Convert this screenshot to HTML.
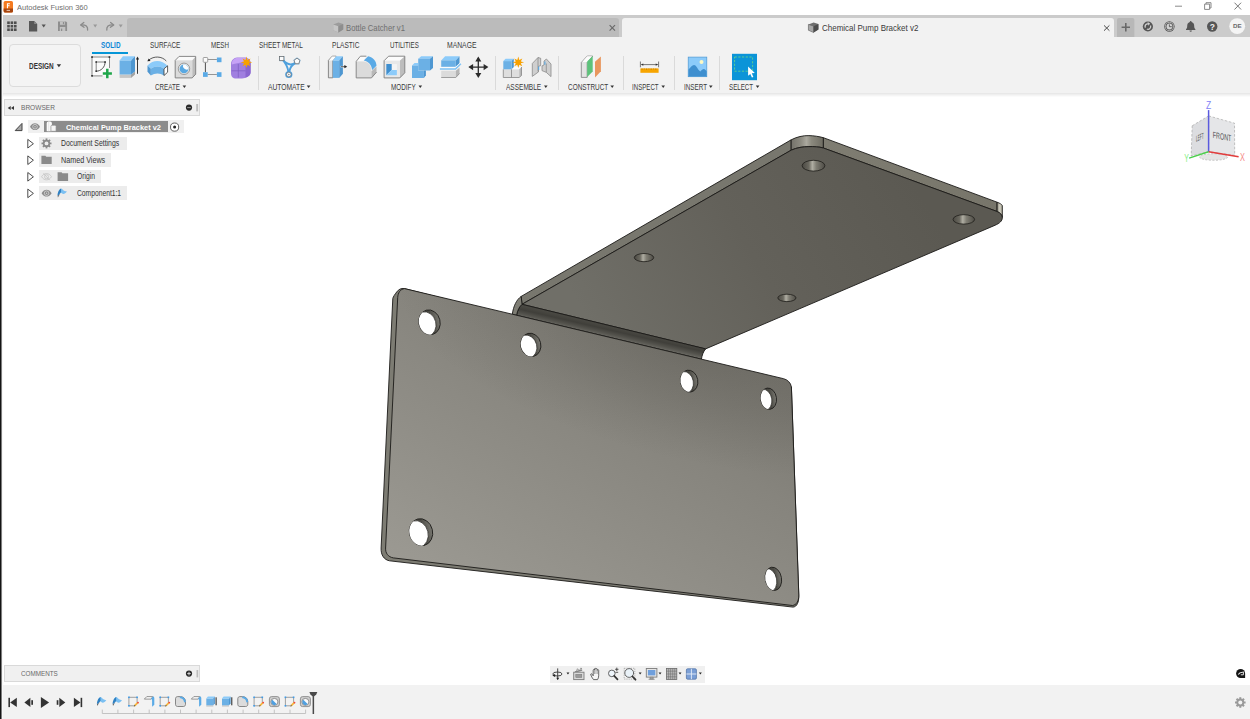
<!DOCTYPE html>
<html lang="en">
<head>
<meta charset="utf-8">
<title>Autodesk Fusion 360</title>
<style>
html,body{margin:0;padding:0;}
body{width:1250px;height:719px;overflow:hidden;background:#fff;font-family:"Liberation Sans",Arial,sans-serif;}
#app{position:relative;width:1250px;height:719px;overflow:hidden;background:#fff;}
.abs{position:absolute;}
.t{position:absolute;white-space:nowrap;transform-origin:0 50%;line-height:10px;height:10px;font-size:7px;color:#4a4a4a;}
#titlebar{left:0;top:0;width:1250px;height:15px;background:#fff;}
#tabbar{left:0;top:15px;width:1250px;height:22px;background:#cbcbcb;}
#tab1{left:127px;top:18px;width:492px;height:19px;background:#bbbbbb;border-radius:3px 3px 0 0;}
#tab2{left:622px;top:18px;width:492px;height:19px;background:#f2f2f2;border-radius:3px 3px 0 0;}
#toolbar{left:0;top:37px;width:1250px;height:56px;background:#f2f2f2;}
#tbline{left:0;top:93px;width:1250px;height:4px;background:linear-gradient(#e8e8e8 0,#e8e8e8 25%,#efefef 25%,#efefef 50%,#f5f5f5 50%,#f5f5f5 75%,#fbfbfb 75%);}
#tbline2{display:none;}
#leftedge{left:0;top:0;width:3px;height:719px;background:linear-gradient(90deg,#141414 0,#141414 33.3%,#7d7d7d 33.3%,#7d7d7d 66.6%,#f7f7f7 66.6%);}
.sep{position:absolute;width:1px;top:56px;height:34px;background:#dadada;}
#design{left:9px;top:44px;width:70px;height:41px;border:1px solid #dcdcdc;border-radius:4px;background:#f4f4f4;}
.tab{font-size:7px;color:#3c3c3c;}
.lbl{font-size:7px;color:#3c3c3c;}
.row{position:absolute;background:#ececec;height:13px;}
#bottombar{left:0;top:685px;width:1250px;height:34px;background:#f2f2f2;}
#comments{left:4px;top:665px;width:196px;height:17px;background:#f0f0f0;border:1px solid #d9d9d9;box-sizing:border-box;}
#browserhdr{left:4px;top:99px;width:196px;height:17px;background:#f0f0f0;border:1px solid #d9d9d9;box-sizing:border-box;}
#navbar{left:550px;top:666px;width:155px;height:17px;background:#f0f0f0;}
</style>
</head>
<body>
<div id="app">
<svg class="abs" style="left:0;top:97px" width="1250" height="588" viewBox="0 97 1250 588">
<defs>
  <linearGradient id="frontg" gradientUnits="userSpaceOnUse" x1="790" y1="385" x2="620" y2="686">
    <stop offset="0" stop-color="#7a7871"/>
    <stop offset="0.3" stop-color="#86847d"/>
    <stop offset="0.6" stop-color="#8f8d86"/>
    <stop offset="1" stop-color="#9b9992"/>
  </linearGradient>
  <radialGradient id="shadeg" gradientUnits="userSpaceOnUse" cx="0" cy="0" r="1" gradientTransform="translate(690 350) rotate(13.2) scale(300 110)">
    <stop offset="0" stop-color="#3c3a34" stop-opacity="0.22"/>
    <stop offset="0.45" stop-color="#3c3a34" stop-opacity="0.13"/>
    <stop offset="1" stop-color="#3c3a34" stop-opacity="0"/>
  </radialGradient>
  <clipPath id="frontclip"><path d="M404.500 288.600L783.600 378.700C787.500 379.700 790.800 382.700 791.400 387L798.800 595C798.900 601 796.500 605 792.500 605.500L393.400 557.900C388 557 385.300 553 385.600 548L397.700 297.500C398 293 400 289.300 404.500 288.600z"/></clipPath>
  <linearGradient id="topg" gradientUnits="userSpaceOnUse" x1="900" y1="160" x2="600" y2="340">
    <stop offset="0" stop-color="#5b5952"/>
    <stop offset="0.5" stop-color="#63615a"/>
    <stop offset="1" stop-color="#706f68"/>
  </linearGradient>
  <linearGradient id="bendg" gradientUnits="userSpaceOnUse" x1="615" y1="326.9" x2="612.3" y2="338.6">
    <stop offset="0" stop-color="#4a4943"/>
    <stop offset="0.35" stop-color="#403f3a"/>
    <stop offset="0.7" stop-color="#55544e"/>
    <stop offset="1" stop-color="#6e6d66"/>
  </linearGradient>
  <linearGradient id="wallg" x1="0" y1="0" x2="1" y2="0">
    <stop offset="0" stop-color="#3a3934"/>
    <stop offset="0.6" stop-color="#4a4943"/>
    <stop offset="1" stop-color="#7b7a73"/>
  </linearGradient>
  <linearGradient id="twallg" x1="0" y1="0" x2="1" y2="0">
    <stop offset="0" stop-color="#4a4842"/>
    <stop offset="0.3" stop-color="#6b6960"/>
    <stop offset="0.45" stop-color="#b0aea3"/>
    <stop offset="0.62" stop-color="#7f7d73"/>
    <stop offset="1" stop-color="#4d4b45"/>
  </linearGradient>
  <linearGradient id="backg" gradientUnits="userSpaceOnUse" x1="823" y1="0" x2="997" y2="0">
    <stop offset="0" stop-color="#7f7d72"/>
    <stop offset="1" stop-color="#77756a"/>
  </linearGradient>
  <linearGradient id="rcg" gradientUnits="userSpaceOnUse" x1="997" y1="0" x2="1002.5" y2="0">
    <stop offset="0" stop-color="#8a887b"/>
    <stop offset="0.5" stop-color="#cfcdbf"/>
    <stop offset="1" stop-color="#a9a799"/>
  </linearGradient>
  <linearGradient id="cornerg" gradientUnits="userSpaceOnUse" x1="791" y1="0" x2="824" y2="0">
    <stop offset="0" stop-color="#74726a"/>
    <stop offset="0.3" stop-color="#8d8b81"/>
    <stop offset="0.47" stop-color="#aaa89e"/>
    <stop offset="0.62" stop-color="#8b897e"/>
    <stop offset="1" stop-color="#6c6a60"/>
  </linearGradient>
</defs>

<path d="M521.2 296.4L791.2 139.8L791.2 150.2L522 304.3z" fill="#78776e" stroke="#1b1a17" stroke-width="0.9" stroke-linejoin="round"/>
<path d="M791.2 139.8C797 136.800 803 135.500 808.900 135.600C814 135.700 819 136.500 823.400 137.700L823.400 148C819 146.800 814 146.500 808.900 146.600C803 146.700 797 147.500 791.200 150.200z" fill="url(#cornerg)" stroke="#1b1a17" stroke-width="0.9" stroke-linejoin="round"/>
<path d="M823.4 137.7L997.1 202.2L997.1 211.5L823.4 148z" fill="url(#backg)" stroke="#1b1a17" stroke-width="0.9" stroke-linejoin="round"/>
<path d="M997.1 202.2C1000 203.300 1001.800 204.400 1002.300 205.600L1002.300 217.500C1001.800 214.500 1000 212.800 997.100 211.500z" fill="url(#rcg)" stroke="#1b1a17" stroke-width="0.9" stroke-linejoin="round"/>
<path d="M522 304.3L791.2 150.2C797 147.500 803 146.700 808.900 146.600C814 146.500 819 146.800 823.400 148L997.100 211.500C1000.500 213 1002.300 215 1002.300 217.800C1002.300 221 999.500 223.300 995.200 225.200L705.600 348.900z" fill="url(#topg)" stroke="#1b1a17" stroke-width="0.9" stroke-linejoin="round"/>
<ellipse cx="813.5" cy="165.7" rx="11.4" ry="5.4" fill="url(#twallg)" stroke="#1f1e1b" stroke-width="0.8"/>
<ellipse cx="963.8" cy="219.4" rx="10.8" ry="4.7" fill="url(#twallg)" stroke="#1f1e1b" stroke-width="0.8"/>
<ellipse cx="644" cy="257.6" rx="9.7" ry="4.1" fill="url(#twallg)" stroke="#1f1e1b" stroke-width="0.8"/>
<ellipse cx="786.9" cy="297.9" rx="9.1" ry="3.7" fill="url(#twallg)" stroke="#1f1e1b" stroke-width="0.8"/>
<path d="M516.600 315.300C517.400 310.300 519.400 306.600 522 304.300L705.600 348.900C703.300 351.500 702 355.300 701.400 359.200z" fill="url(#bendg)" stroke="#1b1a17" stroke-width="0.9" stroke-linejoin="round"/>
<path d="M512.300 314.100C513.500 306 516.500 299.700 521.200 296.400L522 304.300C519.400 306.600 517.400 310.300 516.600 315.300z" fill="#7e7d74" stroke="#1b1a17" stroke-width="0.9" stroke-linejoin="round"/>
<path d="M404.500 288.600C401 287.900 398.600 289.500 396.700 292C394.800 294.500 393.300 296.500 392.800 298.400L381.100 548C380.800 555 384 559.800 389.500 560.800L793 607.100C797 606.800 798.900 602 798.800 596L791.400 387z" fill="#7d7c73" stroke="#1b1a17" stroke-width="0.9" stroke-linejoin="round"/>
<path d="M404.500 288.600L783.600 378.700C787.500 379.700 790.800 382.700 791.400 387L798.800 595C798.900 601 796.500 605 792.500 605.500L393.400 557.900C388 557 385.300 553 385.600 548L397.700 297.500C398 293 400 289.300 404.500 288.600z" fill="url(#frontg)" stroke="#1b1a17" stroke-width="0.9" stroke-linejoin="round"/>
<g clip-path="url(#frontclip)"><rect x="380" y="280" width="430" height="340" fill="url(#shadeg)"/></g>
<g transform="rotate(-14 429.5 322.3)"><clipPath id="hc1"><ellipse cx="429.5" cy="322.3" rx="10.6" ry="12.5"/></clipPath><ellipse cx="429.5" cy="322.3" rx="10.6" ry="12.5" fill="url(#wallg)" stroke="#22211e" stroke-width="0.9"/><g clip-path="url(#hc1)"><ellipse cx="425.0" cy="323.1" rx="10.6" ry="12.5" fill="#fff" stroke="#2a2925" stroke-width="0.7"/></g></g>
<g transform="rotate(-14 530.8 344.9)"><clipPath id="hc2"><ellipse cx="530.8" cy="344.9" rx="10" ry="11.8"/></clipPath><ellipse cx="530.8" cy="344.9" rx="10" ry="11.8" fill="url(#wallg)" stroke="#22211e" stroke-width="0.9"/><g clip-path="url(#hc2)"><ellipse cx="526.5" cy="345.7" rx="10" ry="11.8" fill="#fff" stroke="#2a2925" stroke-width="0.7"/></g></g>
<g transform="rotate(-10 689.1 381.1)"><clipPath id="hc3"><ellipse cx="689.1" cy="381.1" rx="8.7" ry="11.0"/></clipPath><ellipse cx="689.1" cy="381.1" rx="8.7" ry="11.0" fill="url(#wallg)" stroke="#22211e" stroke-width="0.9"/><g clip-path="url(#hc3)"><ellipse cx="684.5" cy="381.70000000000005" rx="8.7" ry="11.0" fill="#fff" stroke="#2a2925" stroke-width="0.7"/></g></g>
<g transform="rotate(-8 768.6 398.7)"><clipPath id="hc4"><ellipse cx="768.6" cy="398.7" rx="7.9" ry="10.7"/></clipPath><ellipse cx="768.6" cy="398.7" rx="7.9" ry="10.7" fill="url(#wallg)" stroke="#22211e" stroke-width="0.9"/><g clip-path="url(#hc4)"><ellipse cx="763.8000000000001" cy="399.3" rx="7.9" ry="10.7" fill="#fff" stroke="#2a2925" stroke-width="0.7"/></g></g>
<g transform="rotate(-14 421 532.2)"><clipPath id="hc5"><ellipse cx="421" cy="532.2" rx="11.6" ry="13.6"/></clipPath><ellipse cx="421" cy="532.2" rx="11.6" ry="13.6" fill="url(#wallg)" stroke="#22211e" stroke-width="0.9"/><g clip-path="url(#hc5)"><ellipse cx="416.2" cy="533.0" rx="11.6" ry="13.6" fill="#fff" stroke="#2a2925" stroke-width="0.7"/></g></g>
<g transform="rotate(-10 773.4 578.8)"><clipPath id="hc6"><ellipse cx="773.4" cy="578.8" rx="8.1" ry="11.7"/></clipPath><ellipse cx="773.4" cy="578.8" rx="8.1" ry="11.7" fill="url(#wallg)" stroke="#22211e" stroke-width="0.9"/><g clip-path="url(#hc6)"><ellipse cx="768.4" cy="579.4" rx="8.1" ry="11.7" fill="#fff" stroke="#2a2925" stroke-width="0.7"/></g></g>
<g>
  <ellipse cx="1213.600" cy="157" rx="14" ry="3.300" fill="#e4e4e4" stroke="#b0b0b0" stroke-width="0.700" stroke-dasharray="2 1.500"/>
  <path d="M1192.200 125.800L1208.600 115.900L1208.600 151.800L1191.200 156z" fill="#d9dadd" fill-opacity="0.920" stroke="#a9a9a9" stroke-width="0.700" stroke-dasharray="2.600 1.600"/>
  <path d="M1208.600 115.900L1234.500 123.200L1234.700 155.300L1208.600 151.800z" fill="#e3e4e6" fill-opacity="0.920" stroke="#a9a9a9" stroke-width="0.700" stroke-dasharray="2.600 1.600"/>
  <text transform="matrix(1 -0.44 0 1 1195.900 141.700)" font-family="'Liberation Sans',sans-serif" font-size="8.400" fill="#4e4e4e" textLength="7.800" lengthAdjust="spacingAndGlyphs">LEFT</text>
  <text transform="matrix(1 0.19 0 1 1212.800 137.800)" font-family="'Liberation Sans',sans-serif" font-size="9" fill="#4e4e4e" textLength="18.500" lengthAdjust="spacingAndGlyphs">FRONT</text>
  <path d="M1208.600 110.100V151.800" stroke="#5a5ade" stroke-width="1.500"/>
  <path d="M1208.600 151.800L1238.600 156.800" stroke="#e23c3c" stroke-width="1.500"/>
  <path d="M1208.600 151.800L1189.100 158.100" stroke="#4ccf4c" stroke-width="1.500"/>
  <text x="1206.100" y="108.600" font-family="'Liberation Sans',sans-serif" font-size="10" fill="#8282f6" textLength="5.200" lengthAdjust="spacingAndGlyphs">Z</text>
  <text x="1240.100" y="160.700" font-family="'Liberation Sans',sans-serif" font-size="10" fill="#f58585" textLength="4.900" lengthAdjust="spacingAndGlyphs">X</text>
  <text x="1184.300" y="162.300" font-family="'Liberation Sans',sans-serif" font-size="10" fill="#86ee86" textLength="4.600" lengthAdjust="spacingAndGlyphs">Y</text>
</g>

</svg>
<div class="abs" id="titlebar"></div>
<div class="abs" id="tabbar"></div>
<div class="abs" id="tab1"></div>
<div class="abs" id="tab2"></div>
<div class="abs" id="toolbar"></div>
<div class="abs" id="tbline"></div>
<div class="abs" id="tbline2"></div>
<!-- title bar -->
<svg class="abs" style="left:0;top:0" width="1250" height="38" viewBox="0 0 1250 38">
  <!-- app icon -->
  <rect x="3.6" y="1" width="9.4" height="11.5" rx="1.6" fill="#f47a20"/>
  <path d="M3.6 8.6h9.4v2.3a1.6 1.6 0 0 1-1.6 1.6h-6.2a1.6 1.6 0 0 1-1.6-1.6z" fill="#a5440f"/>
  <rect x="6.6" y="9.9" width="3.4" height="0.9" fill="#f6d5c0"/>
  <path d="M6.9 3.2h3v1h-1.9v1.1h1.6v1h-1.6v1.9h-1.1z" fill="#fff"/>
  <!-- window controls -->
  <path d="M1175 6.2h7" stroke="#7d7d7d" stroke-width="0.9" fill="none"/>
  <path d="M1204.6 4.1h5v5.3h-5z M1206 4.1v-1.4h5v5.3h-1.4" stroke="#7d7d7d" stroke-width="0.9" fill="none"/>
  <path d="M1234.5 2.7l6.6 6.8M1241.1 2.7l-6.6 6.8" stroke="#6a6a6a" stroke-width="0.9" fill="none"/>
  <!-- QAT: grid -->
  <g fill="#4e4e4e">
    <rect x="7.2" y="21.4" width="2.6" height="2.6"/><rect x="10.6" y="21.4" width="2.6" height="2.6"/><rect x="14" y="21.4" width="2.6" height="2.6"/>
    <rect x="7.2" y="24.9" width="2.6" height="2.6"/><rect x="10.6" y="24.9" width="2.6" height="2.6"/><rect x="14" y="24.9" width="2.6" height="2.6"/>
    <rect x="7.2" y="28.4" width="2.6" height="2.6"/><rect x="10.6" y="28.4" width="2.6" height="2.6"/><rect x="14" y="28.4" width="2.6" height="2.6"/>
  </g>
  <!-- file -->
  <path d="M29 21.1h5.2l3 3v7.4h-8.2z" fill="#575757"/>
  <path d="M34.2 21.1v3h3z" fill="#8a8a8a"/>
  <path d="M41.6 24.5h4.2l-2.1 3.1z" fill="#555"/>
  <!-- save -->
  <path d="M58 21.4h8l1.1 1.1v8.5h-9.1z" fill="#8e8e8e"/>
  <rect x="60" y="21.4" width="4.8" height="3.4" fill="#c2c2c2"/>
  <rect x="62.9" y="22" width="1.1" height="2.2" fill="#8e8e8e"/>
  <rect x="59.8" y="27" width="5.5" height="4" fill="#c2c2c2"/>
  <rect x="61" y="28.6" width="1.2" height="2.4" fill="#8e8e8e"/>
  <!-- undo -->
  <path d="M87.6 30c0.4-3.4-1.6-5.4-6.2-5.2" stroke="#8a8a8a" stroke-width="1.3" fill="none" stroke-linecap="round"/>
  <path d="M83.8 22.4l-3.2 2.5 3.4 2.4" stroke="#8a8a8a" stroke-width="1.3" fill="none" stroke-linecap="round" stroke-linejoin="round"/>
  <path d="M93.2 24.6h4l-2 2.9z" fill="#999"/>
  <!-- redo -->
  <path d="M106.8 30c-0.4-3.4 1.6-5.4 6.2-5.2" stroke="#8a8a8a" stroke-width="1.3" fill="none" stroke-linecap="round"/>
  <path d="M110.6 22.4l3.2 2.5-3.4 2.4" stroke="#8a8a8a" stroke-width="1.3" fill="none" stroke-linecap="round" stroke-linejoin="round"/>
  <path d="M118.7 24.6h4l-2 2.9z" fill="#999"/>
  <!-- tab 1 icon + close -->
  <g>
    <path d="M333.200 24.400l5.200-2 4.800 1.600v5.400l-4.800 3.200-5.200-2.400z" fill="#9c9c9c"/>
    <path d="M333.200 24.400l5.200 1.800v6.400l-5.200-2.400z" fill="#c6c6c6"/>
    <path d="M338.400 26.200l4.800-2.200v5.400l-4.800 3.200z" fill="#8e8e8e"/>
  </g>
  <path d="M609.600 25.200l5.400 5.400M615 25.200l-5.400 5.400" stroke="#6a6a6a" stroke-width="1.200"/>
  <!-- tab 2 icon + close -->
  <g>
    <path d="M808.400 24.400l5.200-2 4.800 1.600v5.400l-4.800 3.200-5.200-2.400z" fill="#6e6e6e"/>
    <path d="M808.400 24.400l5.200 1.800v6.400l-5.200-2.400z" fill="#a8a8a8" stroke="#666" stroke-width="0.500"/>
    <path d="M813.600 26.200l4.800-2.200v5.400l-4.800 3.200z" fill="#4c4c4c"/>
  </g>
  <path d="M1104 25.400l5.400 5.300M1109.400 25.400l-5.400 5.300" stroke="#4a4a4a" stroke-width="1"/>
  <!-- plus button -->
  <path d="M1117 37v-17a2 2 0 0 1 2-2h13.400a2 2 0 0 1 2 2v17z" fill="#b8b8b8"/>
  <path d="M1121.600 27.200h8.400M1125.800 23v8.400" stroke="#686868" stroke-width="1.600"/>
  <!-- job status -->
  <circle cx="1147.900" cy="26.500" r="5.100" fill="#555"/>
  <path d="M1144.700 27.800a3.300 3.300 0 0 1 3.200-4.600l-0.400-1.200 2.600 1.500-1.600 2.300-0.300-1.300a2 2 0 0 0-2.200 2.900z M1151.100 25.300a3.300 3.300 0 0 1-4.600 4.200l0.800-1a2 2 0 0 0 2.600-2.700z" fill="#d0d0d0"/>
  <!-- clock -->
  <circle cx="1169.400" cy="26.500" r="5.200" fill="#555"/>
  <circle cx="1169.400" cy="26.500" r="4.100" fill="none" stroke="#cfcfcf" stroke-width="0.700"/>
  <circle cx="1169.400" cy="26.500" r="2.900" fill="#d2d2d2"/>
  <path d="M1169.400 24.400v2.300h2.400" stroke="#555" stroke-width="0.900" fill="none"/>
  <!-- bell -->
  <path d="M1190.700 21.100c0.600 0 0.900 0.400 0.900 0.900c2 0.600 2.600 2.300 2.600 4.200c0 1.500 0.500 2.300 1.200 3v0.700h-9.400v-0.700c0.700-0.700 1.200-1.500 1.200-3c0-1.900 0.600-3.600 2.600-4.200c0-0.500 0.300-0.900 0.900-0.900z" fill="#555"/>
  <path d="M1189.500 30.500h2.400a1.200 1.200 0 0 1-2.400 0z" fill="#555"/>
  <!-- help -->
  <circle cx="1212.200" cy="26.500" r="5.200" fill="#555"/>
  <!-- avatar -->
  <circle cx="1237.200" cy="26.200" r="7.900" fill="#f4f4f4"/>
</svg>
<span class="t" style="left:1209.700px;top:21.600px;font-size:8.500px;font-weight:bold;color:#efefef;width:5px;text-align:center;">?</span>
<span class="t" style="left:1233.100px;top:21.300px;font-size:6.200px;font-weight:bold;color:#6a6a6a;letter-spacing:0px;">DE</span>
<span class="t" style="left:17.2px;top:2.62px;font-size:7.8px;color:#6e6e6e;transform:scaleX(0.9650);">Autodesk Fusion 360</span>
<span class="t" style="left:345.5px;top:23.12px;font-size:8.4px;color:#707070;transform:scaleX(0.9183);">Bottle Catcher v1</span>
<span class="t" style="left:821.6px;top:23.12px;font-size:8.4px;color:#3a3a3a;transform:scaleX(0.9543);">Chemical Pump Bracket v2</span>

<!-- toolbar -->
<div class="abs" id="design"></div>
<div class="abs" style="left:92px;top:52px;width:36px;height:2.4px;background:#0696d7;"></div>
<div class="sep" style="left:258px"></div>
<div class="sep" style="left:319px"></div>
<div class="sep" style="left:495px"></div>
<div class="sep" style="left:558px"></div>
<div class="sep" style="left:623px"></div>
<div class="sep" style="left:674px"></div>
<div class="sep" style="left:719px"></div>
<svg class="abs" style="left:0;top:37px" width="1250" height="58" viewBox="0 37 1250 58">
<defs>
  <path id="dd" d="M0 0h3.600l-1.800 2.600z"/>
</defs>
<!-- dropdown arrows -->
<g fill="#333">
  <path d="M56.700 64.300h4.400l-2.200 3z"/>
  <use href="#dd" x="182.600" y="85.400"/>
  <use href="#dd" x="306.800" y="85.400"/>
  <use href="#dd" x="418.500" y="85.400"/>
  <use href="#dd" x="544" y="85.400"/>
  <use href="#dd" x="610.400" y="85.400"/>
  <use href="#dd" x="661.400" y="85.400"/>
  <use href="#dd" x="709" y="85.400"/>
  <use href="#dd" x="755.800" y="85.400"/>
</g>
<!-- sketch -->
<g>
  <rect x="92" y="57" width="17.500" height="18.900" fill="#fbfbfb"/>
  <path d="M92 57h17.500M92 57v18.900M109.500 57v11M92 75.900h10.500" stroke="#6e6e6e" stroke-width="0.800" fill="none"/>
  <g fill="#333"><rect x="91.200" y="56.200" width="1.700" height="1.700"/><rect x="108.600" y="56.200" width="1.700" height="1.700"/><rect x="91.200" y="75" width="1.700" height="1.700"/></g>
  <path d="M96.200 62h8.900M96.200 62v9.200" stroke="#666" stroke-width="0.800" fill="none"/>
  <path d="M105.100 62c0 5-4 9.200-8.900 9.200" stroke="#444" stroke-width="0.900" fill="none"/>
  <g fill="#333"><rect x="95.400" y="61.200" width="1.600" height="1.600"/><rect x="104.300" y="61.200" width="1.600" height="1.600"/><rect x="95.400" y="70.400" width="1.600" height="1.600"/></g>
  <path d="M102.800 73.500h9.100M107.300 68.800v9.400" stroke="#1fa64a" stroke-width="2.500" fill="none"/>
</g>
<!-- extrude -->
<g>
  <path d="M119.600 74.500h11.400v3.400h-11.400z" fill="#c6c6c6"/>
  <path d="M131 74.500l4-3v3l-4 3.400z" fill="#a3a3a3"/>
  <path d="M119.600 60.400h11.400v14.100h-11.400z" fill="#6bb0e5"/>
  <path d="M119.600 60.400l3.300-4.200h12.100l-4 4.200z" fill="#8ccbfa"/>
  <path d="M131 60.400l4-4.200v15.300l-4 3z" fill="#4e97d1"/>
  <path d="M137.500 58v15.800" stroke="#222" stroke-width="0.900"/>
  <path d="M137.500 56.600l1.600 3h-3.200z" fill="#222"/>
</g>
<!-- revolve -->
<g>
  <path d="M147.500 65.400c6-6 14-6 20.100 0.400l-3.600 3c-4-3.200-9-3.200-13.200 0z" fill="#8ccbfa"/>
  <path d="M150.800 68.800c4.200-3.200 9.200-3.200 13.200 0v6.700c-4-2.800-9-2.800-13.200 0z" fill="#6bb0e5"/>
  <path d="M147.500 65.400l3.300 3.400v6.700l-3.300-3.700z" fill="#4e97d1"/>
  <path d="M164 68.800l3.600-3v6.400l-3.600 3.300z" fill="#fff" stroke="#333" stroke-width="0.800" stroke-linejoin="round"/>
  <path d="M166.300 61c-4.500-5-12.500-5.200-17.600-0.900" stroke="#333" stroke-width="0.800" fill="none"/>
  <path d="M147.300 61.200l3.200-0.300-1.700-2.400z" fill="#222"/>
</g>
<!-- hole -->
<g>
  <path d="M175.200 60.400l3.900-4h16.600l-3.500 4z" fill="#fafafa"/>
  <path d="M192.200 60.400l3.500-4v17.800l-3.500 3.700z" fill="#bcbcbc"/>
  <path d="M175.200 60.400h17v17.500h-17z" fill="#dbdbdb"/>
  <path d="M175.200 77.900v-17.500l3.900-4h16.600v17.800l-3.500 3.700z" fill="none" stroke="#7c7c7c" stroke-width="0.900" stroke-linejoin="round"/>
  <circle cx="184" cy="68.800" r="5.700" fill="#e8e8e8" stroke="#8a8a8a" stroke-width="0.800"/>
  <circle cx="184" cy="68.800" r="4.400" fill="#5aa9e2"/>
  <path d="M183.200 64.500a4.400 4.400 0 0 1 5.100 4.800a3.800 3.800 0 0 1-5.100-4.800z" fill="#fdfdfd"/>
</g>
<!-- pattern -->
<g>
  <path d="M207.600 59.500h9.300M207.600 74.500h9.300" stroke="#8a8a8a" stroke-width="0.900"/>
  <path d="M205.400 62.400v9.800" stroke="#3a3a3a" stroke-width="0.900"/>
  <rect x="203.200" y="57.500" width="4.500" height="4.800" rx="0.800" fill="#fbfbfb" stroke="#8a8a8a" stroke-width="0.800"/>
  <rect x="216.900" y="57.500" width="4.600" height="4.700" fill="#5aaae6"/>
  <rect x="203" y="72.200" width="4.700" height="4.700" fill="#5aaae6"/>
  <rect x="216.900" y="72.200" width="4.600" height="4.700" fill="#5aaae6"/>
</g>
<!-- form -->
<g>
  <path d="M231 63.500c0-3 3-6.100 6-6.100h8c3 0 5.600 2.500 5.600 5v9.500c0 2-1 3.600-2.600 4.600l-3 1.600c-1 0.400-2 0.400-3 0.400h-6c-3 0-5-2-5-5z" fill="#a07fe0"/>
  <path d="M231.800 63.500c0-3 2.500-5.500 5.500-5.500h7c2 0 3.500 1 4.500 2.500c-3 1.500-12 2.500-17 4z" fill="#c6a2f6"/>
  <path d="M245.500 66l5.100-3.500v9.400c0 2-1 3.600-2.600 4.600l-2.500 1.300z" fill="#8a66cf"/>
  <path d="M238.300 64v13.500M231.500 70.800h14" stroke="#7d5cc0" stroke-width="0.700" fill="none"/>
  <path d="M246.500 56.600l1 3.300 3-1.500-1.500 3 3.300 0.900-3.300 0.900 1.500 3-3-1.500-1 3.300-1-3.300-3 1.500 1.500-3-3.300-0.900 3.300-0.900-1.500-3 3 1.500z" fill="#f7a100"/>
</g>
<!-- automate -->
<g>
  <g fill="none" stroke="#4fa0dc" stroke-width="1.900" stroke-linecap="round">
    <path d="M282.800 59.800Q287.800 65.800 288.300 71.500"/>
    <path d="M295.800 62.600Q290.200 65.800 289.300 71.500"/>
    <path d="M283.200 60.200Q288.800 67 295.600 62.800"/>
  </g>
  <circle cx="288.800" cy="74.500" r="3.600" fill="#4fa0dc"/>
  <circle cx="288.800" cy="74.500" r="2.300" fill="#f6f6f6" stroke="#666" stroke-width="0.600"/>
  <circle cx="288.800" cy="74.500" r="0.800" fill="#888"/>
  <rect x="279" y="56" width="5.500" height="5.300" rx="0.800" fill="#4fa0dc" fill-opacity="0.550"/>
  <rect x="279.600" y="56.500" width="4.300" height="4.100" fill="#fbfbfb" stroke="#666" stroke-width="0.700"/>
  <path d="M297 57.300l3.700 2.700-1.400 4.400h-4.600l-1.400-4.400z" fill="#4fa0dc" fill-opacity="0.600"/>
  <path d="M297 58.200l2.900 2.100-1.100 3.400h-3.600l-1.100-3.400z" fill="#fbfbfb" stroke="#666" stroke-width="0.700"/>
</g>
<!-- press pull -->
<g>
  <path d="M328.400 77.800v-17.400l3.800-4.200h4l-3.400 4.200v17.400z" fill="#e2e2e2" stroke="#707070" stroke-width="0.800" stroke-linejoin="round"/>
  <path d="M332.200 56.400h3.800l-3.200 4h-3.800z" fill="#fcfcfc"/>
  <path d="M332.800 60.400h6.400v17.500h-6.400z" fill="#6bb0e5"/>
  <path d="M332.800 60.400l3.400-4.200h6.700l-3.700 4.200z" fill="#8ccbfa"/>
  <path d="M339.200 60.400l3.700-4.200v17.600l-3.700 4.100z" fill="#4e97d1"/>
  <path d="M340.600 66.700h4.500" stroke="#eee" stroke-width="1.600"/>
  <path d="M341 66.700h4" stroke="#333" stroke-width="0.800"/>
  <path d="M347.200 66.700l-2.800-1.600v3.200z" fill="#222"/>
</g>
<!-- fillet -->
<g>
  <path d="M356.200 61.400l4.200-5.200h6l-2.600 4.200z" fill="#fcfcfc"/>
  <path d="M356.200 61.400h7c5 0 8.300 4 8.300 9.800v6.700h-15.300z" fill="#dbdbdb"/>
  <path d="M371.500 71.200l5-4.800v5.800l-5 5.700z" fill="#b8b8b8"/>
  <path d="M363.800 60.400l4.300-4.200c5 1 8.400 5 8.400 9.600l-4.300 4.300c-0.500-5-3.400-8.700-8.400-9.700z" fill="#5aaae6"/>
  <path d="M366.400 56.200h-6l-4.200 5.200v16.500h15.300l5-5.700" fill="none" stroke="#808080" stroke-width="0.900" stroke-linejoin="round"/>
</g>
<!-- shell -->
<g>
  <path d="M384.100 60.700l4.500-4.500h16.200l-5 4.500z" fill="#fcfcfc"/>
  <path d="M399.800 60.700l5-4.500v16.600l-5 5.100z" fill="#bdbdbd"/>
  <path d="M384.100 60.700h15.700v17.200h-15.700z" fill="#e8e8e8"/>
  <path d="M384.100 77.900v-17.200l4.500-4.500h16.200v16.600l-5 5.100z" fill="none" stroke="#7c7c7c" stroke-width="0.900" stroke-linejoin="round"/>
  <rect x="386.300" y="64.100" width="10.600" height="11.100" fill="#f4f4f4"/>
  <path d="M386.300 64.100h5.400v5.900l-5.400 5.200z" fill="#3f8fcf"/>
  <path d="M386.300 75.200l5.400-5.200h5.200v5.200z" fill="#8ccbfa"/>
</g>
<!-- combine -->
<g>
  <path d="M418.200 58.700l3-2.500h11.800l-3 2.500z" fill="#8ccbfa"/>
  <path d="M430 58.700l3-2.500v11.900l-3 2.400z" fill="#4e97d1"/>
  <path d="M418.200 58.700h11.800v11.800h-11.800z" fill="#6bb0e5"/>
  <path d="M412 65.400l2.500-2.300h3.700v2.300z" fill="#8ccbfa"/>
  <path d="M412 65.400h6.200v5.100h5.700v7.400h-11.900z" fill="#6bb0e5"/>
  <path d="M423.900 70.500h2v4.700l-2 2.700z" fill="#4e97d1"/>
</g>
<!-- split body -->
<g>
  <path d="M441.200 70.800h14.600v6.700h-14.600z" fill="#dbdbdb"/>
  <path d="M455.800 70.800l3.700-3v5.700l-3.700 4z" fill="#b5b5b5"/>
  <path d="M441.200 77.500h14.600l3.700-4" fill="none" stroke="#8c8c8c" stroke-width="0.800"/>
  <path d="M441.200 60.400l3.900-4.200h14.400l-3.700 4.200z" fill="#8ccbfa"/>
  <path d="M455.800 60.400l3.700-4.200v7.600l-3.700 3z" fill="#4e97d1"/>
  <path d="M441.200 60.400h14.600v6.400h-14.600z" fill="#6bb0e5"/>
  <path d="M439.900 67.600h15.600l5.400-5" stroke="#fbfbfb" stroke-width="1.200" fill="none"/>
  <path d="M439.900 69h15.600l5.400-5.200" stroke="#7fc2f5" stroke-width="1.500" fill="none"/>
</g>
<!-- move -->
<g fill="#2b2b2b">
  <path d="M470 67.100h16.600M478.300 58v18" stroke="#2b2b2b" stroke-width="1.300" fill="none"/>
  <path d="M478.300 56.400l3 5h-6z"/><path d="M478.300 77.900l3-5h-6z"/>
  <path d="M468.300 67.100l4.800-3.100v6.200z"/><path d="M488.400 67.100l-4.800-3.100v6.200z"/>
</g>
<!-- new component -->
<g>
  <path d="M503.300 69.300h8.200v8.200h-8.200z" fill="#dedede"/>
  <path d="M511.500 69.300h7.800v8.200h-7.800z" fill="#dedede"/>
  <path d="M511.500 69.300l2.300-2.300h7.700l-2.200 2.300z" fill="#fcfcfc"/>
  <path d="M519.300 69.300l2.200-2.300v8.300l-2.200 2.200z" fill="#b8b8b8"/>
  <path d="M503.300 69.300v8.200h16l2.200-2.200v-8.300M511.500 69.300v8.200" fill="none" stroke="#858585" stroke-width="0.800"/>
  <path d="M503.300 61.100l2.300-2.300h8.200l-2.300 2.300z" fill="#8ccbfa"/>
  <path d="M511.500 61.100l2.300-2.300v8.200l-2.300 2.300z" fill="#4e97d1"/>
  <path d="M503.300 61.100h8.200v8.200h-8.200z" fill="#6bb0e5"/>
  <path d="M518.300 56.600l1 3.300 3-1.500-1.500 3 3.300 0.900-3.300 0.900 1.500 3-3-1.500-1 3.300-1-3.300-3 1.500 1.500-3-3.300-0.900 3.300-0.900-1.500-3 3 1.500z" fill="#f7a100"/>
</g>
<!-- joint -->
<g stroke="#8a8a8a" stroke-width="0.800" stroke-linejoin="round">
  <path d="M532.300 63.500l5.700-6 2.700 0.800v7.400l-2.200 0.600v5.600l-6.200 4.500z" fill="#cfcfcf"/>
  <path d="M538 57.500v14" fill="none"/>
  <path d="M546.400 59l4.600 5v12.600l-4.800-4.300-4.200-1.700v-4.700l2-0.900v-4z" fill="#cfcfcf"/>
  <path d="M546.300 63.500v8.800" fill="none"/>
</g>
<path d="M538.700 66.500v3.500M544.900 61.500v3.300" stroke="#5aaae6" stroke-width="1.100"/>
<!-- construct -->
<g>
  <path d="M581.300 77.400v-14.900l5.900-6.400h5.500l-5.500 6.400v14.900z" fill="#e4e4e4" stroke="#7c7c7c" stroke-width="0.800" stroke-linejoin="round"/>
  <path d="M587.200 56.300h5l-5 5.800h-5z" fill="#fcfcfc"/>
  <path d="M587.200 61.600l5.500-5.500v15.500l-5.500 5.500z" fill="#5cc27a"/>
  <path d="M595 61.800l5.900-5.200v14.600l-5.900 6.200z" fill="#e8975e"/>
</g>
<!-- inspect -->
<g>
  <path d="M640.400 61.500v5.800M658.600 61.500v5.800M641.500 64.600h16" stroke="#444" stroke-width="0.700" fill="none"/>
  <path d="M640.900 64.600l2.400-1.200v2.400zM658.100 64.600l-2.400-1.200v2.400z" fill="#333"/>
  <rect x="640.400" y="68.400" width="18.200" height="4.400" fill="#f7a500"/>
  <path d="M642 68.400v1.600M644.300 68.400v1.100M646.600 68.400v1.600M648.900 68.400v1.100M651.200 68.400v1.600M653.500 68.400v1.100M655.800 68.400v1.600" stroke="#b87400" stroke-width="0.600"/>
</g>
<!-- insert -->
<g>
  <rect x="688.200" y="57.100" width="18.600" height="19.600" fill="#8ccbfa" stroke="#4e97d1" stroke-width="0.700"/>
  <path d="M688.500 69.500c2-2 3.500-4.500 5.500-4.500c2.500 0 4 5.500 6.300 6.400c1.300-1 2.300-2.400 3.500-2.400c1.200 0 2 1.200 2.800 2.300v5.200h-18.100z" fill="#3f8fcf"/>
  <circle cx="701.500" cy="62.100" r="2" fill="#fdf9c4"/>
</g>
<!-- select -->
<g>
  <rect x="732" y="53.800" width="25" height="26.400" fill="#0b94d8"/>
  <rect x="734.600" y="57" width="18" height="14.200" fill="none" stroke="#62d38c" stroke-width="0.900" stroke-dasharray="2.200 1.500"/>
  <path d="M748.100 66.500v9.300l2.200-1.900 1.600 3.700 1.500-0.700-1.600-3.600 3-0.200z" fill="#fff"/>
</g>

</svg>
<span class="t" style="left:100.5px;top:40.62px;font-size:8.2px;color:#0f86d6;transform:scaleX(0.7790);font-weight:bold;">SOLID</span><span class="t" style="left:150.2px;top:40.62px;font-size:8.2px;color:#3a3a3a;transform:scaleX(0.7861);">SURFACE</span><span class="t" style="left:211.0px;top:40.62px;font-size:8.2px;color:#3a3a3a;transform:scaleX(0.7609);">MESH</span><span class="t" style="left:258.6px;top:40.62px;font-size:8.2px;color:#3a3a3a;transform:scaleX(0.7822);">SHEET METAL</span><span class="t" style="left:332.0px;top:40.62px;font-size:8.2px;color:#3a3a3a;transform:scaleX(0.8026);">PLASTIC</span><span class="t" style="left:389.6px;top:40.62px;font-size:8.2px;color:#3a3a3a;transform:scaleX(0.7536);">UTILITIES</span><span class="t" style="left:446.8px;top:40.62px;font-size:8.2px;color:#3a3a3a;transform:scaleX(0.8310);">MANAGE</span>
<span class="t" style="left:28.8px;top:61.12px;font-size:8.5px;color:#333;transform:scaleX(0.7547);font-weight:bold;">DESIGN</span><span class="t" style="left:155.0px;top:82.62px;font-size:8.2px;color:#3a3a3a;transform:scaleX(0.7667);">CREATE</span><span class="t" style="left:268.2px;top:82.62px;font-size:8.2px;color:#3a3a3a;transform:scaleX(0.8182);">AUTOMATE</span><span class="t" style="left:391.0px;top:82.62px;font-size:8.2px;color:#3a3a3a;transform:scaleX(0.7725);">MODIFY</span><span class="t" style="left:505.8px;top:82.62px;font-size:8.2px;color:#3a3a3a;transform:scaleX(0.7975);">ASSEMBLE</span><span class="t" style="left:567.7px;top:82.62px;font-size:8.2px;color:#3a3a3a;transform:scaleX(0.7840);">CONSTRUCT</span><span class="t" style="left:632.4px;top:82.62px;font-size:8.2px;color:#3a3a3a;transform:scaleX(0.7493);">INSPECT</span><span class="t" style="left:684.0px;top:82.62px;font-size:8.2px;color:#3a3a3a;transform:scaleX(0.7695);">INSERT</span><span class="t" style="left:728.9px;top:82.62px;font-size:8.2px;color:#3a3a3a;transform:scaleX(0.7564);">SELECT</span>

<!-- browser -->
<div class="abs" id="browserhdr"></div>
<div class="row" style="left:27.600px;top:120.200px;width:156.300px;height:13.300px;background:#f0f0f0;"></div>
<div class="abs" style="left:44.200px;top:121.200px;width:123.800px;height:10.700px;background:#8c8c8c;"></div>
<div class="row" style="left:39.400px;top:136.700px;width:87.200px;height:13.700px;"></div>
<div class="row" style="left:39.400px;top:153.200px;width:71.400px;height:13.500px;"></div>
<div class="row" style="left:39.400px;top:169.800px;width:61.500px;height:13.700px;"></div>
<div class="row" style="left:39.400px;top:186.400px;width:88px;height:13.500px;"></div>
<svg class="abs" style="left:0;top:96px" width="210" height="110" viewBox="0 96 210 110">
  <!-- header icons -->
  <path d="M10.700 105.900v4.200l-3-2.100zM14 105.900v4.200l-3-2.100z" fill="#333"/>
  <circle cx="189" cy="107.600" r="3.100" fill="#2a2a2a"/>
  <path d="M187.200 107.600h3.600" stroke="#9a9a9a" stroke-width="1"/>
  <rect x="196.200" y="104" width="1.900" height="7.400" fill="#bdbdbd"/>
  <!-- root expander -->
  <path d="M22 123.400v7.200h-6.800z" fill="#a8a8a8" stroke="#444" stroke-width="1" stroke-linejoin="round"/>
  <!-- eye -->
  <g id="eye1">
    <path d="M30 126.700c2.500-4.500 7.400-4.500 10 0c-2.600 4.500-7.500 4.500-10 0z" fill="#8c8c8c"/>
    <circle cx="35" cy="126.700" r="2.300" fill="none" stroke="#d6d6d6" stroke-width="0.800"/>
    <circle cx="35" cy="126.700" r="0.700" fill="#d0d0d0"/>
  </g>
  <!-- component doc icon -->
  <path d="M46.700 123.200a1.800 1.800 0 0 1 1.800-1.800h1.600a1.800 1.800 0 0 1 1.800 1.800v8.100h-5.200z" fill="#fbfbfb"/>
  <path d="M48.700 121.600v9.700" stroke="#dcdcdc" stroke-width="0.700"/>
  <path d="M50.900 126.400a1.200 1.200 0 0 1 1.200-1.200h2.800a1.200 1.200 0 0 1 1.200 1.200v4.900h-5.200z" fill="#f6f6f6" stroke="#8c8c8c" stroke-width="0.700"/>
  <!-- radio -->
  <circle cx="174.600" cy="127.100" r="4.100" fill="#fff" stroke="#3a3a3a" stroke-width="0.800"/>
  <circle cx="174.600" cy="127.100" r="1.500" fill="#222"/>
  <!-- expanders -->
  <g fill="#fff" stroke="#3a3a3a" stroke-width="0.900" stroke-linejoin="round">
    <path d="M27.800 139.400l5.600 4.300-5.600 4.300z"/>
    <path d="M27.800 155.900l5.600 4.300-5.600 4.300z"/>
    <path d="M27.800 172.500l5.600 4.300-5.600 4.300z"/>
    <path d="M27.800 189.100l5.600 4.300-5.600 4.300z"/>
  </g>
  <!-- gear -->
  <g transform="translate(46.500 143.400)">
    <g fill="#8a8a8a">
      <rect x="-0.900" y="-5" width="1.800" height="10"/>
      <rect x="-0.900" y="-5" width="1.800" height="10" transform="rotate(45)"/>
      <rect x="-0.900" y="-5" width="1.800" height="10" transform="rotate(90)"/>
      <rect x="-0.900" y="-5" width="1.800" height="10" transform="rotate(135)"/>
      <circle r="3.600"/>
    </g>
    <circle r="1.900" fill="#ececec"/>
  </g>
  <!-- folders -->
  <path d="M41.400 155.800h4l0.800 1h5.500v7.300h-10.300z" fill="#8a8a8a"/>
  <path d="M57.600 172.300h4l0.800 1h5.700v7.600h-10.500z" fill="#8a8a8a"/>
  <!-- eye off -->
  <path d="M41.600 176.700c2.500-4.200 7.300-4.200 9.900 0c-2.600 4.200-7.400 4.200-9.900 0z" fill="none" stroke="#c4c4c4" stroke-width="0.800"/>
  <circle cx="46.500" cy="176.700" r="2" fill="none" stroke="#c4c4c4" stroke-width="0.800"/>
  <path d="M43.400 173.400l6.400 6.800" stroke="#c4c4c4" stroke-width="0.800"/>
  <!-- eye 2 -->
  <path d="M41.600 193.200c2.500-4.500 7.400-4.500 10 0c-2.600 4.500-7.500 4.500-10 0z" fill="#8c8c8c"/>
  <circle cx="46.600" cy="193.200" r="2.300" fill="none" stroke="#d6d6d6" stroke-width="0.800"/>
  <circle cx="46.600" cy="193.200" r="0.700" fill="#d0d0d0"/>
  <!-- component flag -->
  <g id="cflag" transform="translate(56.600 187.400)">
      <path d="M2 3.500C3 2 4 1.200 4.700 1C5.800 1.600 6.600 3 8 3.600C9 4 9.800 4 10.300 4.200C9.200 5.600 8 6.600 6.800 6.700C5.600 6.600 5 5.600 4.200 5.200L3.400 6z" fill="#7cc0f2"/>
      <path d="M0.900 8C1 6 1.400 4.600 2 3.500C2.600 2.600 3.400 1.600 4.400 1.100L4.500 4.700C3.600 5.600 3 6.600 2.400 7.600z" fill="#2f80c2"/>
      <path d="M1 8L1.300 10L3.900 5.500L2.400 7.600z" fill="#5f5f5f"/>
    </g>
</svg>
<span class="t" style="left:20.5px;top:102.62px;font-size:8.1px;color:#686868;transform:scaleX(0.8105);">BROWSER</span><span class="t" style="left:65.5px;top:122.62px;font-size:8.0px;color:#fff;transform:scaleX(0.9239);font-weight:bold;">Chemical Pump Bracket v2</span><span class="t" style="left:60.8px;top:138.62px;font-size:8.2px;color:#333;transform:scaleX(0.8412);">Document Settings</span><span class="t" style="left:60.8px;top:155.62px;font-size:8.2px;color:#333;transform:scaleX(0.8774);">Named Views</span><span class="t" style="left:77.2px;top:171.62px;font-size:8.2px;color:#333;transform:scaleX(0.8240);">Origin</span><span class="t" style="left:77.2px;top:188.62px;font-size:8.2px;color:#333;transform:scaleX(0.8209);">Component1:1</span>

<!-- bottom -->
<div class="abs" id="navbar"></div>
<div class="abs" id="comments"></div>
<div class="abs" id="bottombar"></div>
<svg class="abs" style="left:0;top:660px" width="1250" height="59" viewBox="0 660 1250 59">
  <circle cx="189" cy="673.600" r="3.100" fill="#2a2a2a"/>
  <path d="M187.200 673.600h3.600M189 671.800v3.600" stroke="#e0e0e0" stroke-width="0.900"/>
  <rect x="196.500" y="670" width="1.700" height="7.400" fill="#bdbdbd"/>
  <!-- playback -->
  <g fill="#333">
    <rect x="8.400" y="697.800" width="1.600" height="9.300"/><path d="M16.800 697.800v9.300l-6.600-4.650z"/>
    <path d="M30.400 697.800v9.300l-6-4.650z"/><rect x="31.300" y="700.200" width="1.700" height="4.600"/>
    <path d="M40.900 697v11l8.200-5.500z"/>
    <rect x="56.700" y="700.200" width="1.700" height="4.600"/><path d="M59.300 697.800v9.300l6-4.650z"/>
    <path d="M73.900 697.800v9.300l6.600-4.650z"/><rect x="80.600" y="697.800" width="1.600" height="9.300"/>
  </g>
  <!-- ruler -->
  <path d="M102.3 709.600v3.900h203.3v-3.900M117.9 709.600v3.900M133.6 709.600v3.900M149.2 709.600v3.900M164.9 709.600v3.900M180.5 709.600v3.900M196.1 709.600v3.900M211.8 709.600v3.900M227.4 709.600v3.900M243.1 709.600v3.900M258.7 709.600v3.900M274.3 709.600v3.900M290.0 709.600v3.900" fill="none" stroke="#bdbdbd" stroke-width="0.900"/>
  <defs>
    <g id="tl-comp">
      <path d="M2 3.500C3 2 4 1.200 4.700 1C5.800 1.600 6.600 3 8 3.600C9 4 9.800 4 10.300 4.200C9.200 5.600 8 6.600 6.800 6.700C5.600 6.600 5 5.600 4.200 5.200L3.400 6z" fill="#7cc0f2"/>
      <path d="M0.900 8C1 6 1.400 4.600 2 3.500C2.600 2.600 3.400 1.600 4.400 1.100L4.500 4.700C3.600 5.600 3 6.600 2.400 7.600z" fill="#2f80c2"/>
      <path d="M1 8L1.300 10L3.900 5.500L2.400 7.600z" fill="#5f5f5f"/>
    </g>
    <g id="tl-sketch">
      <path d="M0.500 0.500h8.200v5.500M0.500 0.500v8.500h5" fill="none" stroke="#8a8a8a" stroke-width="0.800"/>
      <rect x="-0.300" y="-0.300" width="1.600" height="1.600" fill="#3d9be9"/>
      <rect x="7.900" y="-0.300" width="1.600" height="1.600" fill="#3d9be9"/>
      <rect x="-0.300" y="8.200" width="1.600" height="1.600" fill="#3d9be9"/>
      <path d="M5.400 9.800l0.600-1.800 3-3 1.200 1.200-3 3z" fill="#f6b63c"/>
      <path d="M5.400 9.800l0.600-1.800 1.200 1.200z" fill="#555"/>
      <circle cx="9.600" cy="5.800" r="0.900" fill="#ee4444"/>
    </g>
    <g id="tl-flange">
      <path d="M0.300 2.800l2.500-2.500h6l-1.800 2.500z" fill="#fafafa" stroke="#7c7c7c" stroke-width="0.800" stroke-linejoin="round"/>
      <path d="M7 2.800l1.800-2.500c1 0 1.500 0.700 1.500 1.600v6.500l-2.200 2v-6c0-0.900-0.400-1.500-1.100-1.600z" fill="#5aaae6"/>
    </g>
    <g id="tl-fillet">
      <path d="M0.500 2.500c0-1.200 0.900-2.100 2.100-2.100h2.900c2.900 0 5 2.200 5 5v2.800c0 1.200-0.900 2.100-2.100 2.100h-5.800c-1.200 0-2.100-0.900-2.100-2.100z" fill="#dcdcdc" stroke="#7c7c7c" stroke-width="0.900"/>
      <path d="M5.300 0.300c3.200 0 5.500 2.400 5.500 5.400l-1.700 0.500c-0.200-2.400-1.900-4.200-4.500-4.300z" fill="#5aaae6"/>
    </g>
    <g id="tl-extrude">
      <path d="M0 8.800h7v1.300h-7z" fill="#c6c6c6"/>
      <path d="M0 2h7v6.800h-7z" fill="#6bb0e5"/>
      <path d="M0 2l1.600-1.900h7l-1.600 1.900z" fill="#8ccbfa"/>
      <path d="M7 2l1.600-1.900v7l-1.600 1.700z" fill="#4e97d1"/>
      <path d="M9.800 0.800v8" stroke="#222" stroke-width="1"/>
    </g>
    <g id="tl-hole">
      <rect x="0.400" y="0.400" width="10" height="10" rx="2.200" fill="#cfcfcf" stroke="#8a8a8a" stroke-width="0.900"/>
      <circle cx="5.400" cy="5.700" r="3.500" fill="#fafafa" stroke="#7c7c7c" stroke-width="0.800"/>
      <path d="M3.300 3.600l4.400 4.300a3 3 0 0 1-4.400-4.300z" fill="#4f9fe0"/>
    </g>
  </defs>
  <use href="#tl-comp" x="96" y="696"/>
  <use href="#tl-comp" x="111.700" y="696"/>
  <use href="#tl-sketch" x="128.400" y="696.800"/>
  <use href="#tl-flange" x="144" y="696.300"/>
  <use href="#tl-sketch" x="159.700" y="696.800"/>
  <use href="#tl-fillet" x="175" y="696.200"/>
  <use href="#tl-flange" x="191" y="696.300"/>
  <use href="#tl-extrude" x="206.300" y="696.500"/>
  <use href="#tl-extrude" x="222" y="696.500"/>
  <use href="#tl-fillet" x="237.300" y="696.200"/>
  <use href="#tl-sketch" x="253.600" y="696.800"/>
  <use href="#tl-hole" x="269" y="696.200"/>
  <use href="#tl-sketch" x="284.900" y="696.800"/>
  <use href="#tl-hole" x="300" y="696.200"/>
  <!-- marker -->
  <path d="M309.400 692h7.900l-1.200 2.800-2 1.500h-1.500l-2-1.500z" fill="#4a4a4a"/>
  <rect x="312.600" y="695" width="1.500" height="19" fill="#4a4a4a"/>
  <!-- settings gear bottom right -->
  <g transform="translate(1240.300 702.500)">
    <g fill="#9a9a9a">
      <rect x="-1" y="-5.300" width="2" height="10.600"/>
      <rect x="-1" y="-5.300" width="2" height="10.600" transform="rotate(45)"/>
      <rect x="-1" y="-5.300" width="2" height="10.600" transform="rotate(90)"/>
      <rect x="-1" y="-5.300" width="2" height="10.600" transform="rotate(135)"/>
      <circle r="3.900"/>
    </g>
    <circle r="2" fill="#f2f2f2"/>
  </g>
  <g>
  <defs><path id="ndd" d="M0 0h2.900l-1.450 2z"/></defs>
  <g fill="#222">
    <use href="#ndd" x="566.500" y="672.600"/><use href="#ndd" x="638.700" y="672.600"/><use href="#ndd" x="658.600" y="672.600"/><use href="#ndd" x="678.600" y="672.600"/><use href="#ndd" x="698.900" y="672.600"/>
  </g>
  <!-- orbit -->
  <g stroke="#333" fill="none" stroke-width="0.900">
    <path d="M557.700 668.400v11.200"/>
    <ellipse cx="557.400" cy="674" rx="4.600" ry="2"/>
    
  </g>
  <path d="M552.300 675.600l2.800-1.500v3zM557.700 680l-1.500-2.200h3z" fill="#222"/>
  <!-- look at -->
  <g>
    <path d="M574.800 671.200l7-2 0.500 1.600-7 2z" fill="#8a8a8a"/>
    <rect x="573.700" y="672.200" width="10.300" height="7.400" fill="#d9d9d9" stroke="#7c7c7c" stroke-width="0.900"/>
    <rect x="575.800" y="674.300" width="6" height="3.200" fill="#9a9a9a" stroke="#777" stroke-width="0.500"/>
    <path d="M576.500 670.700l1-2 1.200 1.400M580 669.700l1-1.800 1 1.200" fill="none" stroke="#777" stroke-width="0.700"/>
  </g>
  <!-- pan hand -->
  <path d="M593.500 679.600c-1.200-1.500-2.300-3.500-2.800-5c-0.200-0.800 0.700-1.200 1.300-0.500l1.200 1.700v-5.600c0-0.900 1.300-0.900 1.300 0v-1.200c0-0.900 1.400-0.900 1.400 0v0.300c0-0.900 1.400-0.900 1.400 0v1c0-0.900 1.400-0.900 1.400 0v5.500c0 1.500-0.500 2.800-1.200 3.800z" fill="#f6f6f6" stroke="#444" stroke-width="0.800" stroke-linejoin="round"/>
  <path d="M594.500 670.500v3.500M595.900 669.500v4.500M597.300 670v4" stroke="#666" stroke-width="0.500"/>
  <!-- zoom -->
  <g>
    <circle cx="611.800" cy="673.400" r="3.300" fill="#eef5fb" stroke="#555" stroke-width="0.900"/>
    <path d="M614.200 675.900l3.300 3.500" stroke="#333" stroke-width="1.700" stroke-linecap="round"/>
    <path d="M616.800 667.600v3.400M615.100 669.300h3.400M615.400 672.300h2.800" stroke="#333" stroke-width="0.800"/>
  </g>
  <!-- zoom window -->
  <g>
    <rect x="624.200" y="668.300" width="10.600" height="10.800" fill="none" stroke="#888" stroke-width="0.600" stroke-dasharray="1.200 1"/>
    <circle cx="629.200" cy="673" r="4.400" fill="#eaf2f8" stroke="#555" stroke-width="0.900"/>
    <path d="M632.500 676.500l3 3.200" stroke="#333" stroke-width="1.800" stroke-linecap="round"/>
  </g>
  <!-- display -->
  <g>
    <rect x="646.300" y="668.500" width="10.600" height="8.600" fill="#e6e6e6" stroke="#7c7c7c" stroke-width="0.900"/>
    <rect x="647.900" y="670" width="7.400" height="5.400" fill="#6f9fdc"/>
    <path d="M650 677.300h3.200v1.500h-3.200zM648.600 679.300h6" stroke="#7c7c7c" stroke-width="0.800" fill="#ccc"/>
  </g>
  <!-- grid -->
  <g>
    <rect x="666.500" y="668.500" width="10.300" height="11" fill="#b9b9b9" stroke="#6a6a6a" stroke-width="0.800"/>
    <path d="M668.600 668.500v11M670.600 668.500v11M672.700 668.500v11M674.700 668.500v11M666.500 671.200h10.300M666.500 674h10.300M666.500 676.800h10.300" stroke="#666" stroke-width="0.500"/>
  </g>
  <!-- viewports -->
  <g>
    <rect x="686.400" y="668.800" width="10" height="10.400" rx="1.200" fill="#7b9fd6" stroke="#5577aa" stroke-width="0.800"/>
    <path d="M691.400 668.800v10.400M686.400 674h10" stroke="#e8eef8" stroke-width="0.900"/>
  </g>
</g>
<!-- capture icon bottom right -->
<g>
  <path d="M1240.600 669a4.500 4.500 0 0 1 4.500 4.500v4.500h-4.500a4.500 4.500 0 0 1 0-9z" fill="#151515"/>
  <path d="M1238.300 674.600c0.800-1.600 2.400-2.400 4.600-2.300" fill="none" stroke="#f4f4f4" stroke-width="1.100"/>
  <path d="M1243.400 671.600v3.200h-2.600" fill="none" stroke="#f4f4f4" stroke-width="0.900"/>
</g>

</svg>
<span class="t" style="left:20.7px;top:668.62px;font-size:8.1px;color:#686868;transform:scaleX(0.7794);">COMMENTS</span>

<div class="abs" id="leftedge"></div>
</div>
</body>
</html>
